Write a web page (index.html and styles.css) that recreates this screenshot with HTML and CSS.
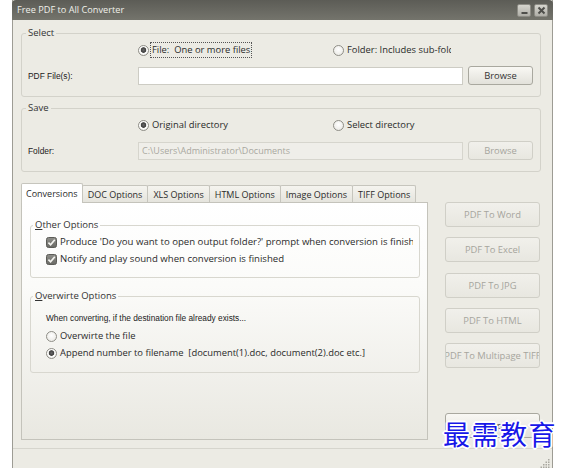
FILE: index.html
```html
<!DOCTYPE html>
<html>
<head>
<meta charset="utf-8">
<title>Free PDF to All Converter</title>
<link rel="stylesheet" href="styles.css">
</head>
<body>
<div class="window">
  <div class="titlebar">
    <span class="title">Free PDF to All Converter</span>
    <div class="tb-buttons">
      <span class="tb-btn"><svg width="9" height="9" viewBox="0 0 9 9"><rect x="1.5" y="6" width="6" height="2" fill="#4e4e4a"/></svg></span>
      <span class="tb-btn"><svg width="9" height="9" viewBox="0 0 9 9"><path d="M1.5 1.5 L7.5 7.5 M7.5 1.5 L1.5 7.5" stroke="#4e4e4a" stroke-width="2" fill="none"/></svg></span>
    </div>
  </div>

  <div class="client">
    <fieldset class="group">
      <legend>Select</legend>
      <div class="radio-row">
        <span class="spacer"></span>
        <label class="radio col2"><span class="rb on"></span><span class="txt focus">File:&nbsp; One or more files</span></label>
        <label class="radio col3"><span class="rb"></span><span class="txt">Folder: Includes sub-folders</span></label>
      </div>
      <div class="input-row">
        <span class="lbl">PDF File(s):</span>
        <span class="input"></span>
        <span class="btn">Browse</span>
      </div>
    </fieldset>

    <fieldset class="group save">
      <legend>Save</legend>
      <div class="radio-row">
        <span class="spacer"></span>
        <label class="radio col2"><span class="rb on"></span><span class="txt">Original directory</span></label>
        <label class="radio col3"><span class="rb"></span><span class="txt">Select directory</span></label>
      </div>
      <div class="input-row">
        <span class="lbl">Folder:</span>
        <span class="input disabled">C:\Users\Administrator\Documents</span>
        <span class="btn disabled">Browse</span>
      </div>
    </fieldset>

    <div class="tabs-area">
      <div class="left">
        <div class="tabstrip">
          <span class="tab active">Conversions</span>
          <span class="tab">DOC Options</span>
          <span class="tab">XLS Options</span>
          <span class="tab">HTML Options</span>
          <span class="tab">Image Options</span>
          <span class="tab">TIFF Options</span>
        </div>
        <div class="pane">
          <fieldset class="group inner">
            <legend><u>O</u>ther Options</legend>
            <label class="check"><svg class="cb" width="11" height="11" viewBox="0 0 11 11"><defs><linearGradient id="cbg" x1="0" y1="0" x2="0" y2="1"><stop offset="0" stop-color="#8f8f8a"/><stop offset="1" stop-color="#6a6a65"/></linearGradient></defs><rect x="0.5" y="0.5" width="10" height="10" rx="2" fill="url(#cbg)" stroke="#5c5c57"/><path d="M2.4 5.6 L4.6 7.8 L8.8 2.8" stroke="#f4f4f0" stroke-width="1.7" fill="none"/></svg><span class="txt">Produce 'Do you want to open output folder?' prompt when conversion is finished</span></label>
            <label class="check"><svg class="cb" width="11" height="11" viewBox="0 0 11 11"><rect x="0.5" y="0.5" width="10" height="10" rx="2" fill="url(#cbg)" stroke="#5c5c57"/><path d="M2.4 5.6 L4.6 7.8 L8.8 2.8" stroke="#f4f4f0" stroke-width="1.7" fill="none"/></svg><span class="txt">Notify and play sound when conversion is finished</span></label>
          </fieldset>
          <fieldset class="group inner overwrite">
            <legend><u>O</u>verwirte Options</legend>
            <div class="note">When converting, if the destination file already exists...</div>
            <label class="radio opt"><span class="rb"></span><span class="txt">Overwirte the file</span></label>
            <label class="radio opt"><span class="rb on"></span><span class="txt">Append number to filename&nbsp; [document(1).doc, document(2).doc etc.]</span></label>
          </fieldset>
        </div>
      </div>
      <div class="actions">
        <span class="btn abtn disabled">PDF To Word</span>
        <span class="btn abtn disabled">PDF To Excel</span>
        <span class="btn abtn disabled">PDF To JPG</span>
        <span class="btn abtn disabled">PDF To HTML</span>
        <span class="btn abtn disabled clipbtn"><span>PDF To Multipage TIFF</span></span>
        <span class="btn abtn last">Stop</span>
      </div>
    </div>
  </div>

  <div class="statusbar">
    <svg class="grip" width="11" height="11" viewBox="0 0 11 11" fill="#a9a8a0">
      <rect x="8" y="2" width="1.5" height="1.5"/>
      <rect x="5.5" y="4.5" width="1.5" height="1.5"/><rect x="8" y="4.5" width="1.5" height="1.5"/>
      <rect x="3" y="7" width="1.5" height="1.5"/><rect x="5.5" y="7" width="1.5" height="1.5"/><rect x="8" y="7" width="1.5" height="1.5"/>
      <rect x="0.5" y="9.5" width="1.5" height="1.5"/><rect x="3" y="9.5" width="1.5" height="1.5"/><rect x="5.5" y="9.5" width="1.5" height="1.5"/><rect x="8" y="9.5" width="1.5" height="1.5"/>
    </svg>
  </div>
</div>
<div class="watermark">最需教育</div>
</body>
</html>
```

FILE: styles.css
```css
* { box-sizing: border-box; }
html, body { margin: 0; padding: 0; background: #ffffff; }
body {
  position: relative;
  width: 566px;
  height: 468px;
  overflow: hidden;
  font-family: "Open Sans", "Noto Sans", sans-serif;
  font-size: 9.4px;
  color: #2b2b2b;
}

.window {
  margin-left: 12px;
  width: 541px;
  height: 468px;
  background: #ecebe4;
  border-left: 1px solid #9d9c94;
  border-right: 1px solid #9d9c94;
  display: flex;
  flex-direction: column;
}

.titlebar {
  height: 20px;
  margin: 0 -1px;
  flex: none;
  background: linear-gradient(#5c5c56, #74746c);
  border-radius: 4px 4px 0 0;
  display: flex;
  align-items: center;
  justify-content: space-between;
  padding: 0 5px;
  color: #f0f0ea;
}
.title { font-size: 9.2px; line-height: 12px; }
.tb-buttons { display: flex; gap: 3px; }
.tb-btn {
  width: 14px;
  height: 13px;
  border-radius: 2px;
  border: 1px solid #8d8c85;
  background: linear-gradient(#d6d5ce, #afaea7);
  display: flex;
  align-items: center;
  justify-content: center;
}

.client {
  flex: none;
  padding: 7px 11px 0 8px;
  display: flex;
  flex-direction: column;
}

.group {
  margin: 0;
  min-width: 0;
  border: 1px solid #d3d2ca;
  border-radius: 3px;
  padding: 3px 6px 11px 6px;
}
.group legend {
  padding: 0 2px;
  margin-left: -2px;
  font-size: 9.5px;
  line-height: 12px;
  color: #333333;
}
.save { margin-top: 5px; }

.radio-row { display: flex; height: 16px; }
.spacer { width: 110px; flex: none; }
.radio { display: flex; align-items: center; height: 16px; white-space: nowrap; }
.col2 { width: 195px; flex: none; }
.col3 { width: 118px; flex: none; overflow: hidden; }
.rb {
  width: 11px;
  height: 11px;
  flex: none;
  border-radius: 50%;
  border: 1px solid #8f8e87;
  background: radial-gradient(circle at 50% 40%, #ffffff, #e6e5df);
  margin-right: 3px;
}
.rb.on {
  background: radial-gradient(circle at 50% 45%, #6a6a6a 0, #3f3f3f 2.4px, #f4f4f0 3.1px, #ffffff 4px, #e6e5df 5px);
}
.txt { line-height: 14px; }
.focus {
  border: 1px dotted #555;
  padding: 0 1px 0 1px;
  margin-left: -2px;
}

.input-row { display: flex; align-items: center; margin-top: 8px; height: 19px; }
.lbl {
  width: 110px;
  flex: none;
  font-family: "Liberation Sans", Arial, sans-serif;
  font-size: 8.4px;
  color: #222;
}
.input {
  width: 325px;
  height: 18px;
  flex: none;
  background: #ffffff;
  border: 1px solid #cdccc4;
  display: flex;
  align-items: center;
  padding-left: 3px;
  font-size: 9px;
}
.input.disabled { background: #efeee9; color: #a9a8a0; border-color: #d6d5cd; }

.btn {
  height: 19px;
  width: 65px;
  flex: none;
  margin-left: 5px;
  border: 1px solid #a9a89f;
  border-radius: 3px;
  background: linear-gradient(#f9f8f4, #e2e1da);
  display: flex;
  align-items: center;
  justify-content: center;
  color: #333;
  white-space: nowrap;
}
.btn.disabled {
  color: #a6a59d;
  border-color: #d0cfc7;
  background: linear-gradient(#f1f0eb, #e8e7e0);
}

.tabs-area { display: flex; margin-top: 11px; gap: 17px; }
.left { width: 407px; flex: none; display: flex; flex-direction: column; }
.tabstrip { display: flex; align-items: flex-end; height: 19px; }
.tab {
  height: 17px;
  padding: 0 5px;
  margin-left: -1px;
  border: 1px solid #c6c5bd;
  border-bottom: none;
  border-radius: 2px 2px 0 0;
  background: linear-gradient(#f5f4ef, #e5e4dd);
  display: flex;
  align-items: center;
  white-space: nowrap;
  color: #2b2b2b;
  font-size: 9px;
}
.tab.active {
  margin-left: 0;
  height: 20px;
  padding: 0 4px;
  margin-bottom: -1px;
  background: #ffffff;
  position: relative;
  z-index: 1;
}
.pane {
  height: 238px;
  border: 1px solid #c4c3bb;
  background: linear-gradient(#ffffff 0, #fbfbf9 35%, #e9e8e1 100%);
  padding: 16px 7px 0 8px;
  display: flex;
  flex-direction: column;
}
.inner {
  border-color: #d8d7cf;
  padding: 3px 6px 10px 15px;
}
.inner legend { margin-left: -13px; }
.check { display: flex; align-items: center; height: 16px; white-space: nowrap; overflow: hidden; font-size: 9.6px; }
.check + .check { margin-top: 1px; }
.cb { flex: none; margin-right: 3px; }
.overwrite { margin-top: 12px; padding-top: 9px; padding-bottom: 11px; }
.note {
  height: 14px;
  line-height: 14px;
  font-family: "Liberation Sans", Arial, sans-serif;
  font-size: 8.3px;
  color: #222;
}
.opt { margin-top: 3px; }
.opt + .opt { margin-top: 1px; }

.actions {
  width: 95px;
  flex: none;
  padding-top: 19px;
  display: flex;
  flex-direction: column;
  gap: 10.3px;
}
.abtn { width: 95px; height: 25px; margin-left: 0; }
.clipbtn { overflow: hidden; justify-content: center; }
.last { margin-top: 35px; }

.statusbar {
  margin-top: auto;
  height: 20px;
  flex: none;
  border-top: 1px solid #d6d5cd;
  display: flex;
  justify-content: flex-end;
  align-items: flex-end;
  padding-right: 1px;
}

.watermark {
  position: absolute;
  left: 443px;
  top: 418px;
  font-family: "Noto Sans CJK SC", "Noto Sans CJK TC", sans-serif;
  font-size: 27px;
  line-height: 32px;
  letter-spacing: 1.5px;
  color: #1717e8;
  text-shadow: 1px 1px 0 #fff, -1px -1px 0 #fff, 1px -1px 0 #fff, -1px 1px 0 #fff, 2px 0 0 #fff, -2px 0 0 #fff, 0 2px 0 #fff, 0 -2px 0 #fff;
  white-space: nowrap;
}
```
